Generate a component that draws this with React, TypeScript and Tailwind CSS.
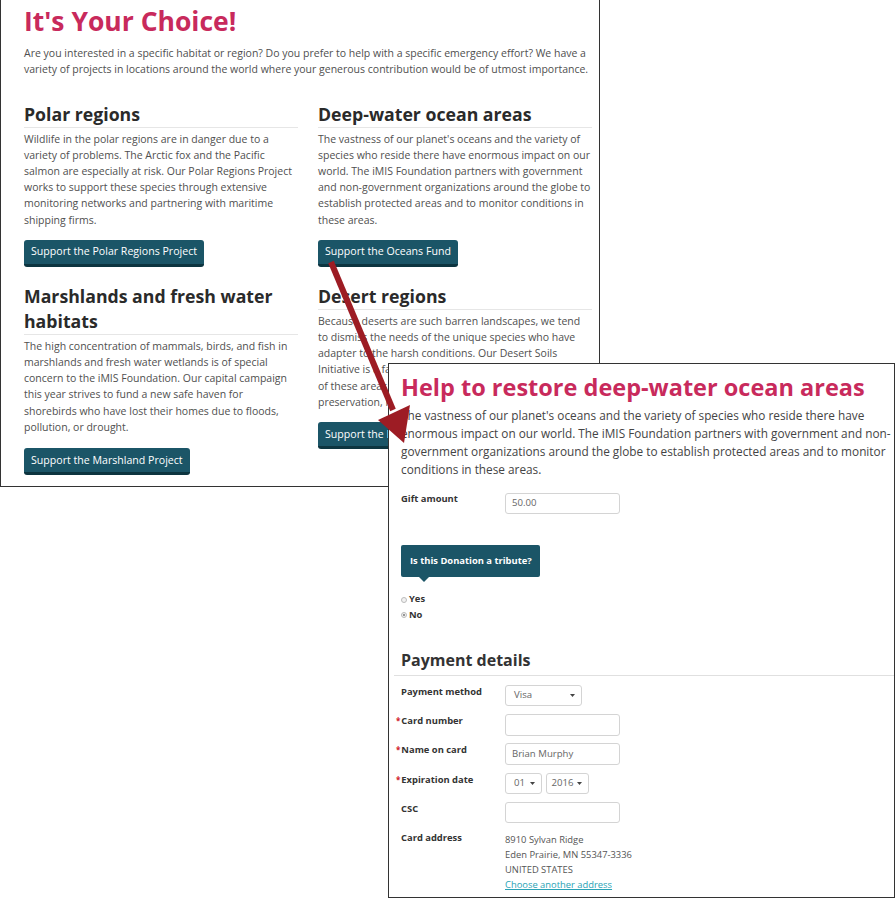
import React from "react";

const font = { fontFamily: '"Open Sans", "Noto Sans", "Liberation Sans", sans-serif' };

function Section({
  title,
  lines,
  button,
  btnMt = "mt-[12px]",
}: {
  title: React.ReactNode;
  lines: string[];
  button: string;
  btnMt?: string;
}) {
  return (
    <div className="flex flex-col">
      <h2 className="text-[17.7px] leading-[25px] font-bold text-[#2a2a2a] border-b border-[#e6e6e6] whitespace-nowrap">{title}</h2>
      <p className="mt-[3px] text-[10.5px] leading-[16.2px] text-[#4f4f4f] whitespace-nowrap">
        {lines.map((l, i) => (
          <React.Fragment key={i}>
            {l}
            {i < lines.length - 1 && <br />}
          </React.Fragment>
        ))}
      </p>
      <div className={btnMt + " flex"}>
        <div className="h-[27px] flex items-center px-[7px] rounded-[3px] bg-[#1b5567] border-b-[3px] border-[#0d3540] text-white text-[10.6px] leading-none whitespace-nowrap">
          {button}
        </div>
      </div>
    </div>
  );
}

function Caret() {
  return (
    <svg width="5" height="3" viewBox="0 0 5 3" className="shrink-0">
      <path d="M0 0 L5 0 L2.5 3 Z" fill="#444" />
    </svg>
  );
}

function Label({ children, req }: { children: React.ReactNode; req?: boolean }) {
  return (
    <div className="w-[104px] shrink-0 text-[9.4px] leading-[14px] font-bold text-[#333] whitespace-nowrap">
      {req && <span className="text-[#d0202a] text-[8px] ml-[-5px] mr-[1px] align-top">*</span>}
      {children}
    </div>
  );
}

function Input({ value, w = "w-[115px]" }: { value?: string; w?: string }) {
  return (
    <div className={w + " h-[21.5px] border border-[#d4d4d4] rounded-[3px] flex items-center pl-[6px] text-[9.6px] text-[#666] bg-white"}>
      {value}
    </div>
  );
}

function Select({ value, w, pl }: { value: string; w: string; pl: string }) {
  return (
    <div className={w + " " + pl + " h-[21.5px] border border-[#d4d4d4] rounded-[3px] flex items-center justify-between pr-[6px] text-[9.6px] text-[#666] bg-white"}>
      <span>{value}</span>
      <Caret />
    </div>
  );
}

export default function App() {
  return (
    <div className="relative w-[895px] h-[899px] bg-white overflow-hidden" style={font}>
      {/* Window 1 */}
      <section className="w-[600px] h-[487px] border-l border-r border-b border-[#333] pl-[23px] pr-[7px] bg-white">
        <h1 className="pt-[5px] text-[26.5px] leading-[33px] font-bold text-[#c82a5c]">It's Your Choice!</h1>
        <p className="mt-[6.5px] text-[10.5px] leading-[16.5px] text-[#4f4f4f] whitespace-nowrap">
          Are you interested in a specific habitat or region? Do you prefer to help with a specific emergency effort? We have a
          <br />
          variety of projects in locations around the world where your generous contribution would be of utmost importance.
        </p>
        <div className="mt-[24px] grid grid-cols-2 gap-x-[20px] gap-y-[17px]">
          <Section
            title="Polar regions"
            lines={[
              "Wildlife in the polar regions are in danger due to a",
              "variety of problems. The Arctic fox and the Pacific",
              "salmon are especially at risk. Our Polar Regions Project",
              "works to support these species through extensive",
              "monitoring networks and partnering with maritime",
              "shipping firms.",
            ]}
            button="Support the Polar Regions Project"
          />
          <Section
            title="Deep-water ocean areas"
            lines={[
              "The vastness of our planet's oceans and the variety of",
              "species who reside there have enormous impact on our",
              "world. The iMIS Foundation partners with government",
              "and non-government organizations around the globe to",
              "establish protected areas and to monitor conditions in",
              "these areas.",
            ]}
            button="Support the Oceans Fund"
          />
          <Section
            title={
              <>
                Marshlands and fresh water
                <br />
                habitats
              </>
            }
            lines={[
              "The high concentration of mammals, birds, and fish in",
              "marshlands and fresh water wetlands is of special",
              "concern to the iMIS Foundation. Our capital campaign",
              "this year strives to fund a new safe haven for",
              "shorebirds who have lost their homes due to floods,",
              "pollution, or drought.",
            ]}
            button="Support the Marshland Project"
            btnMt="mt-[13px]"
          />
          <div className="self-start">
            <Section
              title="Desert regions"
              lines={[
                "Because deserts are such barren landscapes, we tend",
                "to dismiss the needs of the unique species who have",
                "adapter to the harsh conditions. Our Desert Soils",
                "Initiative is a far-reaching effort to study the soils",
                "of these areas and to support their conservation and",
                "preservation, now and in the future.",
              ]}
              button="Support the Desert Soils Initiative"
            />
          </div>
        </div>
      </section>

      {/* Window 2 */}
      <section className="absolute left-[388px] top-[363px] w-[507px] h-[535px] border border-[#333] bg-white pl-[12px] pr-[8px] pt-[9px]">
        <h1 className="text-[23.5px] leading-[28px] font-bold text-[#c82a5c] whitespace-nowrap">
          Help to restore deep-water ocean areas
        </h1>
        <p className="mt-[4.6px] text-[11.8px] leading-[18.3px] text-[#444] whitespace-nowrap">
          The vastness of our planet's oceans and the variety of species who reside there have
          <br />
          enormous impact on our world. The iMIS Foundation partners with government and non-
          <br />
          government organizations around the globe to establish protected areas and to monitor
          <br />
          conditions in these areas.
        </p>

        <div className="mt-[13px] flex items-start">
          <Label>Gift amount</Label>
          <div className="mt-[1px]">
            <Input value="50.00" />
          </div>
        </div>

        <div className="mt-[31px] flex flex-col items-start">
          <div className="h-[32px] w-[139px] rounded-[2px] bg-[#1b5567] flex items-center pl-[9px] text-[9.4px] font-bold text-white whitespace-nowrap">
            Is this Donation a tribute?
          </div>
          <div className="ml-[18px] w-0 h-0 border-l-[5px] border-r-[5px] border-t-[5px] border-l-transparent border-r-transparent border-t-[#1b5567]" />
        </div>

        <div className="mt-[9px] flex flex-col text-[9.4px] leading-[15.5px] font-bold text-[#333]">
          <div className="flex items-center">
            <span className="w-[6px] h-[6px] rounded-full border border-[#bbb] bg-[#f2f2f2] mr-[2px] mt-[1px]" />
            Yes
          </div>
          <div className="flex items-center">
            <span className="w-[6px] h-[6px] rounded-full border border-[#bbb] bg-[#f2f2f2] mr-[2px] mt-[1px] flex items-center justify-center">
              <span className="w-[2px] h-[2px] rounded-full bg-[#777]" />
            </span>
            No
          </div>
        </div>

        <h2 className="mt-[27px] text-[16px] leading-[22px] font-bold text-[#333]">Payment details</h2>
        <div className="mt-[4px] ml-[-7px] mr-[-8px] h-px bg-[#e0e0e0]" />

        <div className="mt-[8.5px] flex flex-col gap-[7.8px]">
          <div className="flex items-start">
            <Label>Payment method</Label>
            <Select value="Visa" w="w-[77px]" pl="pl-[8px]" />
          </div>
          <div className="flex items-start">
            <Label req>Card number</Label>
            <Input />
          </div>
          <div className="flex items-start">
            <Label req>Name on card</Label>
            <Input value="Brian Murphy" />
          </div>
          <div className="flex items-start">
            <Label req>Expiration date</Label>
            <div className="flex gap-[3.5px]">
              <Select value="01" w="w-[37px]" pl="pl-[8px]" />
              <Select value="2016" w="w-[43px]" pl="pl-[5px]" />
            </div>
          </div>
          <div className="flex items-start">
            <Label>CSC</Label>
            <Input />
          </div>
          <div className="flex items-start">
            <Label>Card address</Label>
            <div className="mt-[0.5px] text-[9.4px] leading-[15px] text-[#555]">
              <div>8910 Sylvan Ridge</div>
              <div>Eden Prairie, MN 55347-3336</div>
              <div>UNITED STATES</div>
              <div className="text-[#2aa3b6] underline">Choose another address</div>
            </div>
          </div>
        </div>
      </section>

      {/* Arrow */}
      <svg className="absolute left-0 top-0 pointer-events-none" width="895" height="899" viewBox="0 0 895 899">
        <line x1="331" y1="262" x2="393" y2="410" stroke="#9d1c24" strokeWidth="6" />
        <polygon points="404,443 378,420 410,405" fill="#9d1c24" />
      </svg>
    </div>
  );
}
